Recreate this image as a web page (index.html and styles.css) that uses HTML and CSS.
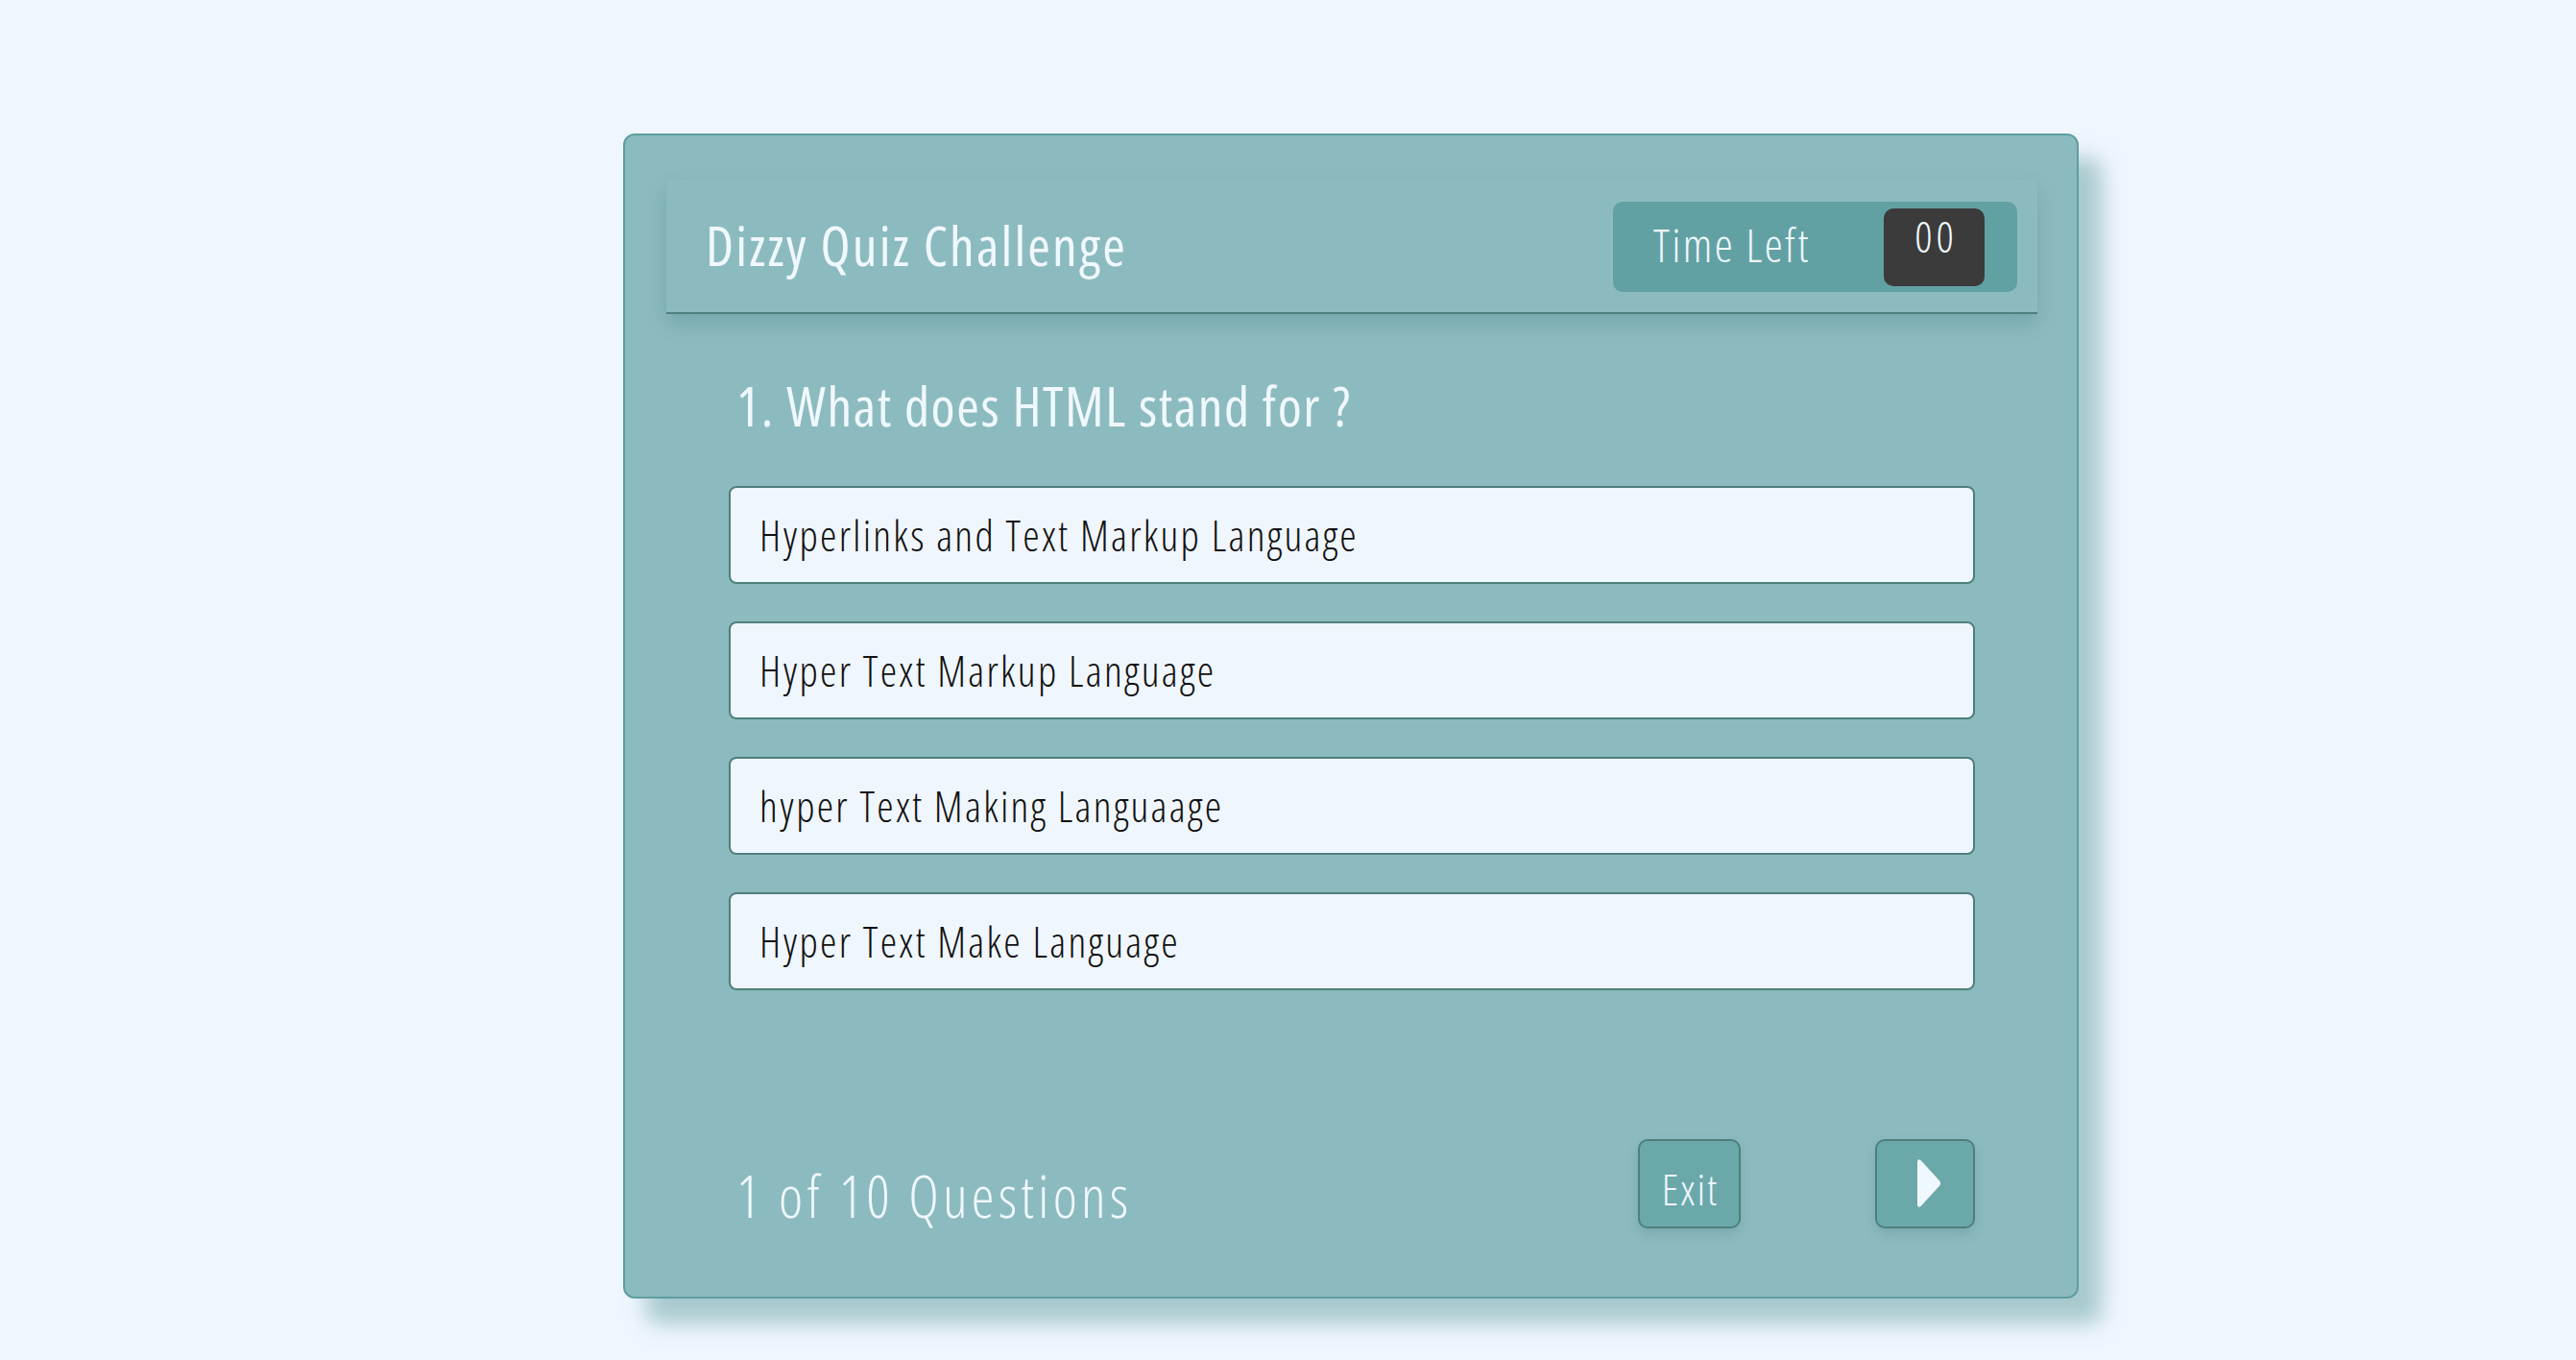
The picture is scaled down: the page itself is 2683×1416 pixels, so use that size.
FILE: index.html
```html
<!DOCTYPE html>
<html lang="en">
<head>
<meta charset="utf-8">
<title>Dizzy Quiz Challenge</title>
<link rel="stylesheet" href="styles.css">
</head>
<body>
<div class="page">
  <div class="card">
    <header class="quiz-header">
      <h1 class="title">Dizzy Quiz Challenge</h1>
      <div class="timer">
        <span class="timer-label">Time Left</span>
        <span class="timer-value">00</span>
      </div>
    </header>
    <main class="quiz-body">
      <h2 class="question">1. What does HTML stand for ?</h2>
      <ul class="options">
        <li class="option">Hyperlinks and Text Markup Language</li>
        <li class="option">Hyper Text Markup Language</li>
        <li class="option">hyper Text Making Languaage</li>
        <li class="option">Hyper Text Make Language</li>
      </ul>
      <footer class="quiz-footer">
        <span class="progress">1 of 10 Questions</span>
        <div class="actions">
          <button class="btn btn-exit">Exit</button>
          <button class="btn btn-next" aria-label="Next">
            <svg width="25" height="50" viewBox="0 0 25 50"><path d="M4 1.5 L23.2 22.6 Q25 25 23.2 27.4 L4 48.5 Q0 52 0 46 V4 Q0 -2 4 1.5 Z" fill="#f0f8ff"/></svg>
          </button>
        </div>
      </footer>
    </main>
  </div>
</div>
</body>
</html>
```

FILE: styles.css
```css
* { box-sizing: border-box; }

body {
  margin: 0;
  background: #f0f6fe;
  font-family: "Open Sans", "DejaVu Sans Condensed", sans-serif;
  font-stretch: 75%;
  font-weight: 300;
}

.page {
  padding: 139px 0 64px 649px;
}

.card {
  width: 1516px;
  background: #8cbbbf;
  border: 2px solid #5f9ea0;
  border-radius: 12px;
  padding-bottom: 71px;
  box-shadow: 24px 26px 22px rgba(95, 158, 160, 0.5);
}

.quiz-header {
  margin: 46px 41px 0 43px;
  height: 140px;
  background: #8cbbbf;
  border-bottom: 2px solid #4e7f7c;
  box-shadow: 0 10px 20px rgba(40, 95, 100, 0.22);
  display: flex;
  align-items: center;
  justify-content: space-between;
  padding: 0 21px 0 41px;
}

.title {
  margin: 0 0 2px;
  font-size: 57px;
  font-weight: 400;
  letter-spacing: 2.2px;
  line-height: 1;
  color: #f0f8ff;
}

.timer {
  width: 421px;
  height: 94px;
  margin-top: 2px;
  background: #62a1a3;
  border-radius: 10px;
  display: flex;
  align-items: center;
  justify-content: space-between;
  padding: 0 34px 0 42px;
}

.timer-label {
  font-size: 48px;
  letter-spacing: 2.4px;
  color: #f0f8ff;
  line-height: 1;
  margin-top: -4px;
}

.timer-value {
  width: 105px;
  height: 81px;
  background: #3b3b3b;
  border-radius: 10px;
  color: #f0f8ff;
  font-size: 45px;
  line-height: 1;
  text-align: center;
  padding: 6px 0 0 4px;
  letter-spacing: 4px;
}

.quiz-body {
  padding: 0 106px 0 108px;
}

.question {
  margin: 67px 0 0 8px;
  font-size: 57px;
  font-weight: 400;
  letter-spacing: 1.6px;
  line-height: 1;
  color: #f0f8ff;
}

.options {
  list-style: none;
  margin: 55px 0 0;
  padding: 0;
  display: flex;
  flex-direction: column;
  gap: 39px;
}

.option {
  height: 102px;
  background: #f0f6fe;
  border: 2px solid #4e7f7c;
  border-radius: 8px;
  display: flex;
  align-items: center;
  padding-left: 30px;
  font-size: 44px;
  letter-spacing: 2.3px;
  color: #111;
}

.quiz-footer {
  margin-top: 155px;
  display: flex;
  justify-content: space-between;
  align-items: flex-end;
}

.progress {
  margin: 0 0 4px 8px;
  font-size: 60px;
  line-height: 1;
  letter-spacing: 4.2px;
  color: #f0f8ff;
}

.actions {
  display: flex;
  gap: 140px;
}

.btn {
  height: 93px;
  background: #6ba8aa;
  border: 2px solid #4e7f7c;
  border-radius: 10px;
  box-shadow: 0 6px 12px rgba(40, 95, 100, 0.18);
  color: #f0f8ff;
  font-family: inherit;
  font-stretch: 75%;
  font-weight: 300;
  display: flex;
  align-items: center;
  justify-content: center;
  padding: 0;
}

.btn-exit {
  width: 107px;
  font-size: 45px;
  letter-spacing: 2px;
  padding: 10px 0 0 2px;
}

.btn-next {
  width: 104px;
  padding: 0 0 2px 8px;
}
```
